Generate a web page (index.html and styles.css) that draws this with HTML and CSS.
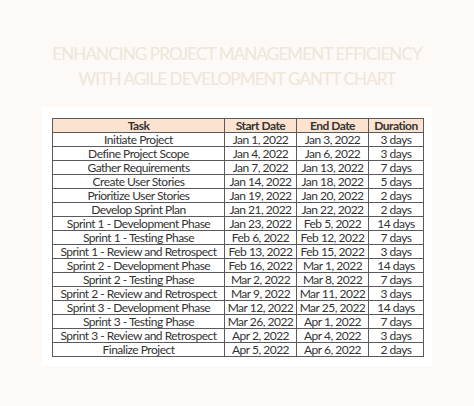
FILE: index.html
```html
<!DOCTYPE html>
<html>
<head>
<meta charset="utf-8">
<link rel="stylesheet" href="styles.css">
</head>
<body>
<div class="page">
  <h1 class="title">ENHANCING PROJECT MANAGEMENT EFFICIENCY<br>WITH AGILE DEVELOPMENT GANTT CHART</h1>
  <div class="card">
    <table class="gantt">
      <colgroup>
        <col class="c-task"><col class="c-start"><col class="c-end"><col class="c-dur">
      </colgroup>
      <thead>
        <tr><th>Task</th><th>Start Date</th><th>End Date</th><th>Duration</th></tr>
      </thead>
      <tbody>
        <tr><td>Initiate Project</td><td>Jan 1, 2022</td><td>Jan 3, 2022</td><td>3 days</td></tr>
        <tr><td>Define Project Scope</td><td>Jan 4, 2022</td><td>Jan 6, 2022</td><td>3 days</td></tr>
        <tr><td>Gather Requirements</td><td>Jan 7, 2022</td><td>Jan 13, 2022</td><td>7 days</td></tr>
        <tr><td>Create User Stories</td><td>Jan 14, 2022</td><td>Jan 18, 2022</td><td>5 days</td></tr>
        <tr><td>Prioritize User Stories</td><td>Jan 19, 2022</td><td>Jan 20, 2022</td><td>2 days</td></tr>
        <tr><td>Develop Sprint Plan</td><td>Jan 21, 2022</td><td>Jan 22, 2022</td><td>2 days</td></tr>
        <tr><td>Sprint 1 - Development Phase</td><td>Jan 23, 2022</td><td>Feb 5, 2022</td><td>14 days</td></tr>
        <tr><td>Sprint 1 - Testing Phase</td><td>Feb 6, 2022</td><td>Feb 12, 2022</td><td>7 days</td></tr>
        <tr><td>Sprint 1 - Review and Retrospect</td><td>Feb 13, 2022</td><td>Feb 15, 2022</td><td>3 days</td></tr>
        <tr><td>Sprint 2 - Development Phase</td><td>Feb 16, 2022</td><td>Mar 1, 2022</td><td>14 days</td></tr>
        <tr><td>Sprint 2 - Testing Phase</td><td>Mar 2, 2022</td><td>Mar 8, 2022</td><td>7 days</td></tr>
        <tr><td>Sprint 2 - Review and Retrospect</td><td>Mar 9, 2022</td><td>Mar 11, 2022</td><td>3 days</td></tr>
        <tr><td>Sprint 3 - Development Phase</td><td>Mar 12, 2022</td><td>Mar 25, 2022</td><td>14 days</td></tr>
        <tr><td>Sprint 3 - Testing Phase</td><td>Mar 26, 2022</td><td>Apr 1, 2022</td><td>7 days</td></tr>
        <tr><td>Sprint 3 - Review and Retrospect</td><td>Apr 2, 2022</td><td>Apr 4, 2022</td><td>3 days</td></tr>
        <tr><td>Finalize Project</td><td>Apr 5, 2022</td><td>Apr 6, 2022</td><td>2 days</td></tr>
      </tbody>
    </table>
  </div>
</div>
</body>
</html>
```

FILE: styles.css
```css
html, body {
  margin: 0;
  padding: 0;
}
body {
  background: #fcf9f6;
  width: 474px;
  height: 406px;
  overflow: hidden;
}
.page {
  padding-top: 41px;
}
.title {
  margin: 0 0 16px 0;
  text-align: center;
  font-family: "Lato", sans-serif;
  font-weight: 400;
  font-size: 17px;
  line-height: 25px;
  color: #efe5da;
  letter-spacing: -0.85px;
}
.card {
  margin-left: 42px;
  width: 390px;
  height: 259px;
  box-sizing: border-box;
  background: #ffffff;
  padding: 11px 9px 0 10px;
}
.gantt {
  border-collapse: collapse;
  width: 371px;
  table-layout: fixed;
  font-family: "Lato", sans-serif;
  font-size: 12px;
  letter-spacing: -0.5px;
  color: #333333;
}
.c-task { width: 172px; }
.c-start { width: 72px; }
.c-end { width: 72px; }
.c-dur { width: 55px; }
.gantt th, .gantt td {
  border: 1px solid #5a5a5a;
  height: 13px;
  padding: 0;
  text-align: center;
  white-space: nowrap;
  line-height: 13px;
}
.gantt th {
  background: #fce3cf;
  font-weight: 700;
}
```
